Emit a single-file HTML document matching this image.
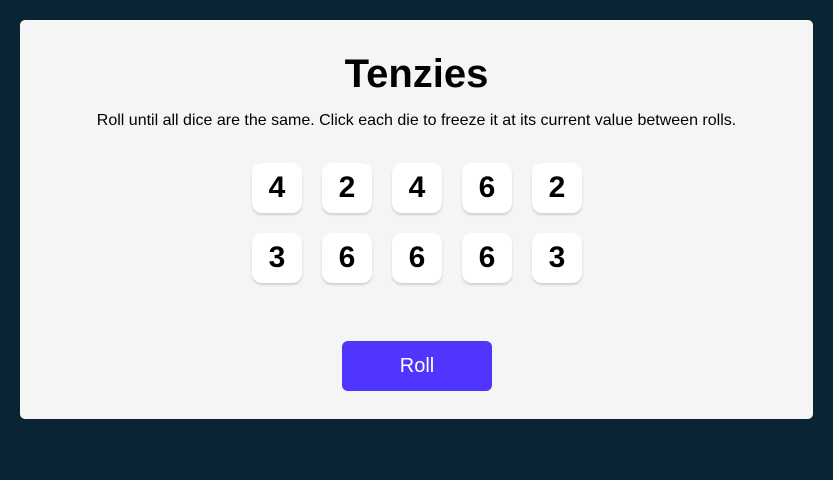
<!DOCTYPE html>
<html><head><meta charset="utf-8"><style>
html,body{margin:0;padding:0;width:833px;height:480px;background:#0B2434;overflow:hidden;font-family:"Liberation Sans",Arial,sans-serif}
.card{position:absolute;left:20px;top:20px;width:793px;height:399px;background:#F5F5F5;border-radius:5px}
h1{position:absolute;left:0;right:0;top:30px;margin:0;text-align:center;font-size:40px;font-weight:bold;color:#000;line-height:48px}
p{position:absolute;left:0;right:0;top:91px;margin:0;text-align:center;font-size:16px;color:#000;line-height:20px}
.die{position:absolute;width:50px;height:50px;background:#fff;border-radius:10px;box-shadow:0 2px 2px rgba(0,0,0,0.15);font-size:30px;font-weight:bold;text-align:center;line-height:50px;color:#000}
.btn{position:absolute;left:322px;top:321px;width:150px;height:50px;background:#5035FF;border-radius:6px;color:#fff;font-size:20px;text-align:center;line-height:50px}
</style></head><body>
<div class="card">
<h1>Tenzies</h1>
<p>Roll until all dice are the same. Click each die to freeze it at its current value between rolls.</p>
<div class="die" style="left:232px;top:143px">4</div>
<div class="die" style="left:302px;top:143px">2</div>
<div class="die" style="left:372px;top:143px">4</div>
<div class="die" style="left:442px;top:143px">6</div>
<div class="die" style="left:512px;top:143px">2</div>
<div class="die" style="left:232px;top:213px">3</div>
<div class="die" style="left:302px;top:213px">6</div>
<div class="die" style="left:372px;top:213px">6</div>
<div class="die" style="left:442px;top:213px">6</div>
<div class="die" style="left:512px;top:213px">3</div>
<div class="btn">Roll</div>
</div>
</body></html>
